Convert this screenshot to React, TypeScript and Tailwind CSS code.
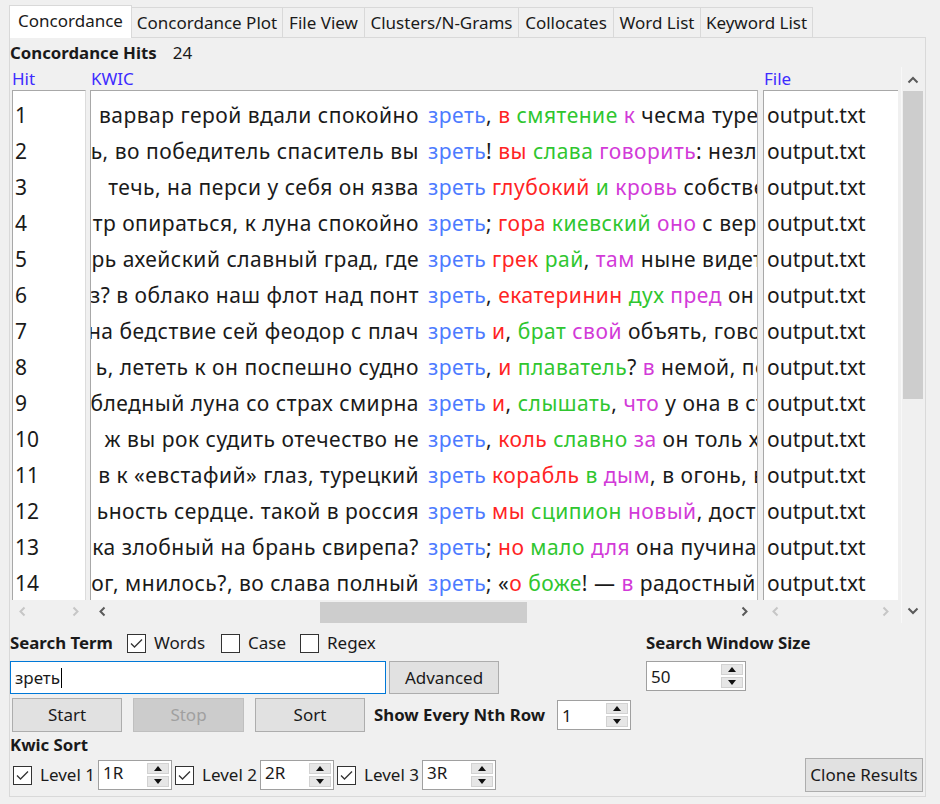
import React from 'react';

type Tone = 'k' | 'r' | 'g' | 'm' | '';

const tone: Record<Tone, string> = {
  k: 'text-[#4d7bff]',
  r: 'text-[#ff2424]',
  g: 'text-[#2fc62f]',
  m: 'text-[#d23ad8]',
  '': 'text-[#1a1a1a]',
};

const rows: { left: string; right: [string, Tone][] }[] = [
  { left: 'варвар герой вдали спокойно', right: [['зреть', 'k'], [',', ''], [' в', 'r'], [' смятение', 'g'], [' к', 'm'], [' чесма туре', '']] },
  { left: 'ь, во победитель спаситель вы', right: [['зреть', 'k'], ['!', ''], [' вы', 'r'], [' слава', 'g'], [' говорить', 'm'], [': незло', '']] },
  { left: 'течь, на перси у себя он язва', right: [['зреть', 'k'], [' глубокий', 'r'], [' и', 'g'], [' кровь', 'm'], [' собстве', '']] },
  { left: 'тр опираться, к луна спокойно', right: [['зреть', 'k'], [';', ''], [' гора', 'r'], [' киевский', 'g'], [' оно', 'm'], [' с вер', '']] },
  { left: 'рь ахейский славный град, где', right: [['зреть', 'k'], [' грек', 'r'], [' рай', 'g'], [',', ''], [' там', 'm'], [' ныне видет', '']] },
  { left: 'з? в облако наш флот над понт', right: [['зреть', 'k'], [',', ''], [' екатеринин', 'r'], [' дух', 'g'], [' пред', 'm'], [' он', '']] },
  { left: 'на бедствие сей феодор с плач', right: [['зреть', 'k'], [' и', 'r'], [',', ''], [' брат', 'g'], [' свой', 'm'], [' объять, гово', '']] },
  { left: 'ь, лететь к он поспешно судно', right: [['зреть', 'k'], [',', ''], [' и', 'r'], [' плаватель', 'g'], ['?', ''], [' в', 'm'], [' немой, по', '']] },
  { left: 'бледный луна со страх смирна', right: [['зреть', 'k'], [' и', 'r'], [',', ''], [' слышать', 'g'], [',', ''], [' что', 'm'], [' у она в ст', '']] },
  { left: 'ж вы рок судить отечество не', right: [['зреть', 'k'], [',', ''], [' коль', 'r'], [' славно', 'g'], [' за', 'm'], [' он толь х', '']] },
  { left: 'в к «евстафий» глаз, турецкий', right: [['зреть', 'k'], [' корабль', 'r'], [' в', 'g'], [' дым', 'm'], [', в огонь, в', '']] },
  { left: 'ьность сердце. такой в россия', right: [['зреть', 'k'], [' мы', 'r'], [' сципион', 'g'], [' новый', 'm'], [', дост', '']] },
  { left: 'ка злобный на брань свирепа?', right: [['зреть', 'k'], [';', ''], [' но', 'r'], [' мало', 'g'], [' для', 'm'], [' она пучина', '']] },
  { left: 'ог, мнилось?, во слава полный', right: [['зреть', 'k'], [';', ''], [' «', ''], ['о', 'r'], [' боже', 'g'], ['! —', ''], [' в', 'm'], [' радостный', '']] },
];

const tabs = [
  { label: 'Concordance Plot', w: 'w-[151px]' },
  { label: 'File View', w: 'w-[82px]' },
  { label: 'Clusters/N-Grams', w: 'w-[154px]' },
  { label: 'Collocates', w: 'w-[95px]' },
  { label: 'Word List', w: 'w-[87px]' },
  { label: 'Keyword List', w: 'w-[112px]' },
];

const Chevron = ({ dir, color }: { dir: 'l' | 'r' | 'u' | 'd'; color: string }) => {
  const vert = dir === 'u' || dir === 'd';
  const d = {
    l: 'M6.5 1.5 L2.5 5.5 L6.5 9.5',
    r: 'M2.5 1.5 L6.5 5.5 L2.5 9.5',
    u: 'M1.5 7.5 L6 3 L10.5 7.5',
    d: 'M1.5 2.5 L6 7 L10.5 2.5',
  }[dir];
  return (
    <svg width={vert ? 12 : 9} height={vert ? 10 : 11} viewBox={vert ? '0 0 12 10' : '0 0 9 11'}>
      <path d={d} fill="none" stroke={color} strokeWidth="2" />
    </svg>
  );
};

const Check = ({ checked }: { checked: boolean }) => (
  <div className="w-[19px] h-[19px] shrink-0 border border-[#333333] bg-white flex items-center justify-center">
    {checked && (
      <svg width="13" height="11" viewBox="0 0 13 11">
        <path d="M1 5.5 L4.5 9 L12 1.5" fill="none" stroke="#333333" strokeWidth="1.3" />
      </svg>
    )}
  </div>
);

const Arrow = ({ up }: { up?: boolean }) => (
  <div className="flex-1 w-[22px] bg-[#e6e6e6] border border-[#d2d2d2] flex items-center justify-center">
    <svg width="8" height="5" viewBox="0 0 8 5">
      <path d={up ? 'M0 5 L4 0 L8 5 Z' : 'M0 0 L4 5 L8 0 Z'} fill="#111111" />
    </svg>
  </div>
);

const Spin = ({ value, className, top }: { value: string; className: string; top?: boolean }) => (
  <div className={`flex shrink-0 bg-white border border-[#a0a0a0] ${className}`}>
    <div className={`flex-1 pl-[4px] text-[17px] leading-none flex ${top ? 'items-start pt-[3px]' : 'items-center'}`}>
      {value}
    </div>
    <div className="flex flex-col gap-[2px] py-[2px] pr-[2px]">
      <Arrow up />
      <Arrow />
    </div>
  </div>
);

const Button = ({ label, className, disabled }: { label: string; className: string; disabled?: boolean }) => (
  <div
    className={`shrink-0 flex items-center justify-center border text-[17px] ${
      disabled ? 'bg-[#cccccc] border-[#bfbfbf] text-[#a0a0a0]' : 'bg-[#e1e1e1] border-[#adadad] text-[#1a1a1a]'
    } ${className}`}
  >
    {label}
  </div>
);

export default function App() {
  return (
    <div className="w-[940px] h-[804px] bg-[#f0f0f0] text-[#1a1a1a] font-['Noto_Sans',sans-serif] overflow-hidden">
      {/* tabs */}
      <div className="flex items-end h-[37px] pl-[9px]">
        <div className="relative z-10 -mb-px h-[33px] w-[123px] bg-white border border-b-0 border-[#d9d9d9] flex items-center justify-center pb-[2px] text-[17px]">
          Concordance
        </div>
        {tabs.map((t) => (
          <div
            key={t.label}
            className={`${t.w} h-[30px] border-t border-r border-[#d9d9d9] flex items-center justify-center text-[17px] whitespace-nowrap`}
          >
            {t.label}
          </div>
        ))}
      </div>

      <div className="ml-[9px] w-[917px] h-[760px] border border-[#d9d9d9] flex flex-col">
        <div className="h-[29px] flex items-center whitespace-nowrap">
          <span className="font-bold text-[16.8px]">Concordance Hits</span>
          <span className="ml-[16px] text-[17px]">24</span>
        </div>

        {/* table */}
        <div className="flex h-[556px]">
          <div className="flex ml-[2px]">
            {/* Hit */}
            <div className="w-[74px] flex flex-col">
              <div className="h-[23px] text-[17px] text-[#3d2bff] leading-[23px]">Hit</div>
              <div className="h-[510px] bg-white border-t border-l border-r border-[#a8a8a8] border-r-[#dcdcdc] overflow-hidden pt-[6px] pl-[2px] text-[21px]">
                {rows.map((_, i) => (
                  <div key={i} className="h-[36px] leading-[36px]">
                    {i + 1}
                  </div>
                ))}
              </div>
              <div className="h-[23px] flex items-center justify-between px-[6px]">
                <Chevron dir="l" color="#c6c6c6" />
                <Chevron dir="r" color="#c6c6c6" />
              </div>
            </div>

            {/* KWIC */}
            <div className="w-[668px] ml-[4px] flex flex-col">
              <div className="h-[23px] text-[17px] text-[#3d2bff] leading-[23px] pl-[1px]">KWIC</div>
              <div className="h-[510px] bg-white border-t border-l border-r border-[#a8a8a8] border-r-[#b8b8b8] overflow-hidden pt-[6px] text-[21px] tracking-[0.5px]">
                {rows.map((r, i) => (
                  <div key={i} className="h-[36px] leading-[36px] flex whitespace-nowrap">
                    <div className="w-[328px] shrink-0 overflow-hidden flex justify-end">
                      <span className="shrink-0">{r.left}</span>
                    </div>
                    <div className="pl-[9px] overflow-hidden">
                      {r.right.map(([t, c], j) => (
                        <span key={j} className={`${tone[c]} whitespace-pre`}>
                          {t}
                        </span>
                      ))}
                    </div>
                  </div>
                ))}
              </div>
              <div className="h-[23px] flex items-center">
                <div className="ml-[8px]">
                  <Chevron dir="l" color="#5a5a5a" />
                </div>
                <div className="ml-[213px] w-[207px] h-[21px] mt-[2px] bg-[#cdcdcd]" />
                <div className="ml-auto mr-[9px]">
                  <Chevron dir="r" color="#5a5a5a" />
                </div>
              </div>
            </div>

            {/* File */}
            <div className="w-[135px] ml-[5px] flex flex-col">
              <div className="h-[23px] text-[17px] text-[#3d2bff] leading-[23px] pl-[1px]">File</div>
              <div className="h-[510px] bg-white border-t border-l border-[#a8a8a8] overflow-hidden pt-[6px] pl-[3px] text-[21px]">
                {rows.map((_, i) => (
                  <div key={i} className="h-[36px] leading-[36px]">
                    output.txt
                  </div>
                ))}
              </div>
              <div className="h-[23px] flex items-center justify-between px-[8px]">
                <Chevron dir="l" color="#c6c6c6" />
                <Chevron dir="r" color="#c6c6c6" />
              </div>
            </div>
          </div>

          {/* vertical scrollbar */}
          <div className="ml-[3px] w-[23px] flex flex-col bg-[#f0f0f0] border-l border-[#f8f8f8]">
            <div className="h-[24px] flex items-center justify-center pt-[2px]">
              <Chevron dir="u" color="#5a5a5a" />
            </div>
            <div className="h-[308px] mx-[1px] bg-[#cdcdcd]" />
            <div className="flex-1" />
            <div className="h-[24px] flex items-center justify-center">
              <Chevron dir="d" color="#5a5a5a" />
            </div>
          </div>
        </div>

        {/* search term row */}
        <div className="mt-[9px] h-[22px] flex items-center text-[17px] whitespace-nowrap">
          <div className="w-[636px] flex items-center">
            <span className="w-[117px] font-bold text-[16.8px]">Search Term</span>
            <div className="w-[94px] flex items-center gap-[8px]">
              <Check checked />
              <span>Words</span>
            </div>
            <div className="w-[79px] flex items-center gap-[8px]">
              <Check checked={false} />
              <span>Case</span>
            </div>
            <div className="flex items-center gap-[8px]">
              <Check checked={false} />
              <span>Regex</span>
            </div>
          </div>
          <span className="font-bold text-[16.8px]">Search Window Size</span>
        </div>

        <div className="mt-[7px] h-[33px] flex items-start">
          <div className="w-[636px] flex">
            <div className="w-[376px] h-[33px] bg-white border border-[#0078d7] flex items-center pl-[4px] text-[17px]">
              зреть
              <span className="ml-[1px] w-px h-[20px] bg-black" />
            </div>
            <Button label="Advanced" className="ml-[3px] w-[110px] h-[33px]" />
          </div>
          <Spin value="50" className="w-[100px] h-[30px]" />
        </div>

        <div className="mt-[4px] h-[34px] flex items-center whitespace-nowrap">
          <Button label="Start" className="ml-[2px] w-[110px] h-[34px]" />
          <Button label="Stop" className="ml-[11px] w-[111px] h-[34px]" disabled />
          <Button label="Sort" className="ml-[11px] w-[110px] h-[34px]" />
          <span className="ml-[9px] w-[183px] font-bold text-[16.8px]">Show Every Nth Row</span>
          <Spin value="1" className="w-[74px] h-[30px]" />
        </div>

        <div className="mt-[1px] h-[24px] flex items-center font-bold text-[16.8px]">Kwic Sort</div>

        <div className="mt-[1px] h-[34px] flex items-center text-[17px] whitespace-nowrap">
          {['1R', '2R', '3R'].map((v, i) => (
            <div key={v} className="flex items-center ml-[3px]">
              <Check checked />
              <span className="ml-[8px] w-[58px]">Level {i + 1}</span>
              <Spin value={v} className="w-[74px] h-[30px]" top />
            </div>
          ))}
          <Button label="Clone Results" className="ml-auto mr-[2px] w-[118px] h-[34px]" />
        </div>
      </div>
    </div>
  );
}
